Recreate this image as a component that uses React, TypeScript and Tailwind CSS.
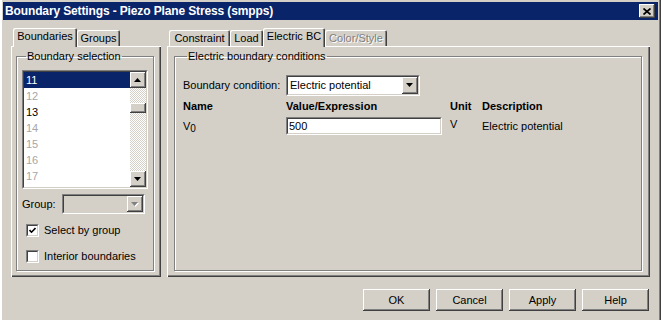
import type { ReactNode } from "react";

const RAISED =
  "bg-[#d4d0c8] shadow-[inset_-1px_-1px_#404040,inset_1px_1px_#ffffff,inset_-2px_-2px_#808080]";

function Sunken({ className = "", inner = "", children }: { className?: string; inner?: string; children?: ReactNode }) {
  return (
    <div className={"border border-t-[#808080] border-l-[#808080] border-b-white border-r-white " + className}>
      <div className={"h-full border border-t-[#404040] border-l-[#404040] border-b-[#d4d0c8] border-r-[#d4d0c8] " + inner}>
        {children}
      </div>
    </div>
  );
}

function Arrow({ down = true, disabled = false }: { down?: boolean; disabled?: boolean }) {
  const pts = down ? "0,0 7,0 3.5,4" : "0,4 7,4 3.5,0";
  return (
    <svg width="8" height="5" viewBox="0 0 8 5">
      {disabled && <polygon points={pts} fill="#ffffff" transform="translate(1 1)" />}
      <polygon points={pts} fill={disabled ? "#808080" : "#000000"} />
    </svg>
  );
}

function ArrowButton({ down = true, disabled = false, className = "" }: { down?: boolean; disabled?: boolean; className?: string }) {
  return (
    <div className={"w-[16px] flex items-center justify-center " + RAISED + " " + className}>
      <Arrow down={down} disabled={disabled} />
    </div>
  );
}

function Tab({ label, selected = false, disabled = false, w }: { label: string; selected?: boolean; disabled?: boolean; w: string }) {
  return (
    <div
      className={
        "flex items-center justify-center bg-[#d4d0c8] rounded-t-[2px] shadow-[inset_1px_1px_#ffffff,inset_-1px_0_#404040,inset_-2px_0_#808080] " +
        w +
        (selected ? " h-[19px] -mb-px relative z-10 pb-[2px]" : " h-[16px]") +
        (disabled ? " text-[#808080] [text-shadow:1px_1px_0_#ffffff]" : "")
      }
    >
      {label}
    </div>
  );
}

function Check({ checked }: { checked: boolean }) {
  return (
    <Sunken className="w-[13px] h-[13px]" inner="bg-white flex items-center justify-center">
      {checked && (
        <svg width="7" height="7" viewBox="0 0 7 7">
          <path d="M0.5 3 L2.5 5.2 L6.5 1" stroke="#000" strokeWidth="1.6" fill="none" />
        </svg>
      )}
    </Sunken>
  );
}

const PANEL =
  "h-[231px] bg-[#d4d0c8] shadow-[inset_1px_1px_#ffffff,inset_-1px_-1px_#404040,inset_-2px_-2px_#808080] pt-[4px] pb-[6px]";
const GROUP = "h-full border border-[#808080] shadow-[inset_1px_1px_#ffffff,1px_1px_#ffffff]";

const ROWS = [
  { n: "11", state: "sel" },
  { n: "12", state: "dis" },
  { n: "13", state: "on" },
  { n: "14", state: "dis" },
  { n: "15", state: "dis" },
  { n: "16", state: "dis" },
  { n: "17", state: "dis" },
];

export default function App() {
  return (
    <div className="w-[661px] h-[320px] overflow-hidden bg-[#d4d0c8] font-['Liberation_Sans',Arial,sans-serif] text-[11px] leading-[13px] text-black px-[3px] pt-[2px] shadow-[inset_2px_0_#ffffff,inset_-1px_0_#404040,inset_-2px_0_#808080]">
      {/* title bar */}
      <div className="h-[18px] bg-[#0a246a] flex items-center pl-[2px] pr-[3px]">
        <span className="text-white font-bold text-[12px] tracking-[-0.13px]">Boundary Settings - Piezo Plane Stress (smpps)</span>
        <div className={"ml-auto w-[16px] h-[14px] flex items-center justify-center " + RAISED}>
          <svg width="8" height="7" viewBox="0 0 8 7">
            <path d="M0.5 0.5 L7.5 6.5 M7.5 0.5 L0.5 6.5" stroke="#000" strokeWidth="1.7" />
          </svg>
        </div>
      </div>

      <div className="flex mt-[8px] ml-[8px] gap-[6px]">
        {/* left: boundaries */}
        <div className="w-[150px]">
          <div className="flex items-end h-[18px] pl-[2px]">
            <Tab label="Boundaries" selected w="w-[64px]" />
            <Tab label="Groups" w="w-[43px]" />
          </div>
          <div className={PANEL + " pl-[5px] pr-[7px]"}>
            <fieldset className={GROUP + " pl-[5px] pr-[5px]"}>
              <legend className="ml-[4px] px-[1px]">Boundary selection</legend>
              <Sunken className="mt-[7px] h-[119px]" inner="bg-white flex">
                <div className="flex-1">
                  {ROWS.map((r) => (
                    <div
                      key={r.n}
                      className={
                        "h-[16px] leading-[16px] pl-[2px] " +
                        (r.state === "sel"
                          ? "bg-[#0a246a] text-white"
                          : r.state === "dis"
                          ? "text-[#a6a6a6]"
                          : "text-black")
                      }
                    >
                      {r.n}
                    </div>
                  ))}
                </div>
                <div className="w-[16px] flex flex-col bg-[repeating-conic-gradient(#ffffff_0_25%,#d4d0c8_0_50%)] bg-[length:2px_2px]">
                  <ArrowButton down={false} className="h-[16px]" />
                  <div className="h-[15px]" />
                  <div className={"h-[10px] " + RAISED} />
                  <div className="flex-1" />
                  <ArrowButton className="h-[16px]" />
                </div>
              </Sunken>

              <div className="flex items-center mt-[5px] h-[20px]">
                <span className="w-[40px]">Group:</span>
                <Sunken className="w-[83px] h-[20px]" inner="bg-[#d4d0c8] flex justify-end">
                  <ArrowButton disabled className="h-full" />
                </Sunken>
              </div>

              <div className="flex items-center gap-[5px] mt-[10px] pl-[4px]">
                <Check checked />
                <span>Select by group</span>
              </div>
              <div className="flex items-center gap-[5px] mt-[13px] pl-[4px]">
                <Check checked={false} />
                <span>Interior boundaries</span>
              </div>
            </fieldset>
          </div>
        </div>

        {/* right: settings */}
        <div className="w-[483px]">
          <div className="flex items-end h-[18px] pl-[2px]">
            <Tab label="Constraint" w="w-[61px]" />
            <Tab label="Load" w="w-[33px]" />
            <Tab label="Electric BC" selected w="w-[62px]" />
            <Tab label="Color/Style" disabled w="w-[62px]" />
          </div>
          <div className={PANEL + " pl-[7px] pr-[8px]"}>
            <fieldset className={GROUP + " pl-[8px] pr-[8px]"}>
              <legend className="ml-[4px] px-[1px]">Electric boundary conditions</legend>
              <div className="flex items-center mt-[12px]">
                <span className="w-[103px]">Boundary condition:</span>
                <Sunken className="w-[134px] h-[21px]" inner="bg-white flex items-center">
                  <span className="flex-1 pl-[2px]">Electric potential</span>
                  <ArrowButton className="h-full" />
                </Sunken>
              </div>

              <div className="grid grid-cols-[103px_164px_32px_1fr] mt-[4px] font-bold">
                <span>Name</span>
                <span>Value/Expression</span>
                <span>Unit</span>
                <span>Description</span>
              </div>

              <div className="grid grid-cols-[103px_164px_32px_1fr] items-center mt-[4px]">
                <span>
                  V<sub className="text-[10px]">0</sub>
                </span>
                <Sunken className="w-[156px] h-[18px]" inner="bg-white flex items-center pl-[1px]">
                  500
                </Sunken>
                <span className="self-start mt-[1px]">V</span>
                <span>Electric potential</span>
              </div>
            </fieldset>
          </div>
        </div>
      </div>

      {/* dialog buttons */}
      <div className="flex justify-end gap-[6px] mt-[12px] pr-[9px]">
        {["OK", "Cancel", "Apply", "Help"].map((b) => (
          <div key={b} className={"w-[67px] h-[22px] flex items-center justify-center " + RAISED}>
            {b}
          </div>
        ))}
      </div>
    </div>
  );
}
